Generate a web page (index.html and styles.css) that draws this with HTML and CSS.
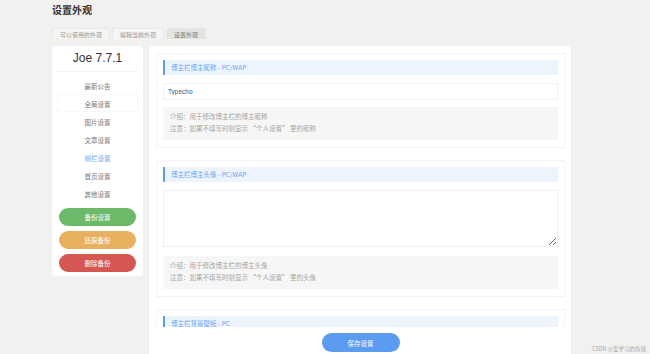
FILE: index.html
```html
<!DOCTYPE html>
<html lang="zh">
<head>
<meta charset="utf-8">
<title>设置外观</title>
<link rel="stylesheet" href="styles.css">
</head>
<body>
<div class="page">
  <h1 class="title">设置外观</h1>
  <div class="tabs">
    <span class="tab">可以使用的外观</span>
    <span class="tab">编辑当前外观</span>
    <span class="tab active">设置外观</span>
  </div>
  <div class="layout">
    <aside class="side">
      <div class="side-title">Joe 7.7.1</div>
      <ul class="menu">
        <li>最新公告</li>
        <li class="hover">全局设置</li>
        <li>图片设置</li>
        <li>文章设置</li>
        <li class="active">侧栏设置</li>
        <li>首页设置</li>
        <li>其他设置</li>
      </ul>
      <div class="btns">
        <button class="btn green">备份设置</button>
        <button class="btn orange">还原备份</button>
        <button class="btn red">删除备份</button>
      </div>
    </aside>
    <main class="panel">
      <div class="scroll">
        <section class="card">
          <div class="head">博主栏博主昵称 - PC/WAP</div>
          <input class="input" type="text" value="Typecho">
          <div class="desc">
            <p>介绍：用于修改博主栏的博主昵称</p>
            <p>注意：如果不填写时则显示 “个人设置” 里的昵称</p>
          </div>
        </section>
        <section class="card">
          <div class="head">博主栏博主头像 - PC/WAP</div>
          <textarea class="area"></textarea>
          <div class="desc">
            <p>介绍：用于修改博主栏的博主头像</p>
            <p>注意：如果不填写时则显示 “个人设置” 里的头像</p>
          </div>
        </section>
        <section class="card">
          <div class="head">博主栏背景壁纸 - PC</div>
        </section>
      </div>
      <div class="footer">
        <button class="save">保存设置</button>
      </div>
    </main>
    <div class="mark-col">
      <span class="mark">CSDN @爱学习的鱼塘</span>
    </div>
  </div>
</div>
</body>
</html>
```

FILE: styles.css
```css
* { box-sizing: border-box; }
html, body { margin: 0; padding: 0; }
body {
  background: #f1f1ef;
  font-family: "Noto Sans CJK SC", "Noto Sans", "Liberation Sans", sans-serif;
  color: #555;
  width: 650px;
  height: 354px;
  overflow: hidden;
}
.page {
  padding: 3px 0 0 52px;
  height: 354px;
  display: flex;
  flex-direction: column;
}
.title {
  margin: 0;
  font-size: 10px;
  line-height: 14px;
  font-weight: bold;
  color: #333;
}
.tabs {
  display: flex;
  gap: 2px;
  margin-top: 11px;
  height: 11px;
}
.tab {
  font-size: 6px;
  line-height: 11px;
  padding: 0 7px;
  color: #999;
  background: #f5f5f4;
  border: 1px solid #e8e8e6;
  border-bottom: none;
}
.tab.active {
  background: #e3e3e1;
  color: #777;
}
.layout {
  display: flex;
  gap: 6px;
  margin-top: 7px;
  flex: 1;
  min-height: 0;
}
.side {
  width: 91px;
  height: 230px;
  background: #fff;
  border-radius: 4px;
  padding: 0 5px;
  align-self: flex-start;
}
.side-title {
  text-align: center;
  font-family: "Liberation Sans", "Noto Sans", sans-serif;
  font-size: 12px;
  line-height: 25px;
  color: #333;
  border-bottom: 1px solid #f4f4f4;
}
.menu {
  list-style: none;
  margin: 4px 0 0;
  padding: 0;
}
.menu li {
  text-align: center;
  font-size: 6.5px;
  line-height: 16px;
  height: 18px;
  margin: 0 6px;
  padding-top: 1px;
  color: #777;
  border: 1px solid transparent;
  border-radius: 2px;
}
.menu li.hover {
  margin: 0 0;
  border-color: #f8f8f8;
}
.menu li.active { color: #6aa5f2; }
.btns {
  display: flex;
  flex-direction: column;
  gap: 5px;
  margin: 6px 2px 0;
}
.btn {
  border: none;
  border-radius: 9px;
  height: 18px;
  color: #fff;
  font-family: inherit;
  font-size: 6.5px;
  padding: 0;
}
.green { background: #6db96a; }
.orange { background: #e9b15f; }
.red { background: #d55752; }
.panel {
  width: 422px;
  background: #fff;
  border-radius: 4px 4px 0 0;
  display: flex;
  flex-direction: column;
  min-height: 0;
}
.scroll {
  flex: 1;
  overflow: hidden;
  padding: 7px 6px 0 7px;
  display: flex;
  flex-direction: column;
  gap: 12px;
}
.card {
  border: 1px solid #f4f4f4;
  padding: 6px 6px 7px;
  display: flex;
  flex-direction: column;
  flex-shrink: 0;
}
.head {
  height: 15px;
  background: #edf4fe;
  border-left: 2px solid #5b9cf0;
  color: #6aa5f2;
  font-size: 6.5px;
  line-height: 15px;
  padding-left: 6px;
}
.input {
  margin-top: 8px;
  height: 17px;
  border: 1px solid #f1f1f1;
  padding: 0 4px;
  font-family: "Liberation Sans", sans-serif;
  font-size: 6.5px;
  color: #555;
  outline: none;
}
.area {
  margin-top: 8px;
  height: 57px;
  border: 1px solid #efefef;
  font-size: 6.5px;
  resize: vertical;
  outline: none;
}
.desc {
  margin-top: 7px;
  height: 33px;
  background: #f6f6f6;
  padding: 3px 7px;
}
.area + .desc { margin-top: 9px; }
.desc p {
  margin: 0;
  font-size: 6.5px;
  line-height: 12px;
  color: #a5a5a5;
}
.footer {
  height: 27px;
  flex-shrink: 0;
  display: flex;
  justify-content: center;
  align-items: flex-start;
  padding-top: 6px;
}
.save {
  width: 78px;
  height: 19px;
  border: none;
  border-radius: 10px;
  background: #5b9cf0;
  color: #fff;
  font-family: inherit;
  font-size: 6.5px;
  padding: 0;
  margin-left: 1px;
}
.mark-col {
  flex: 1;
  display: flex;
  align-items: flex-end;
  justify-content: flex-end;
  padding: 0 4px 1px 0;
}
.mark {
  font-size: 5.5px;
  line-height: 8px;
  color: #aaa;
}
```
